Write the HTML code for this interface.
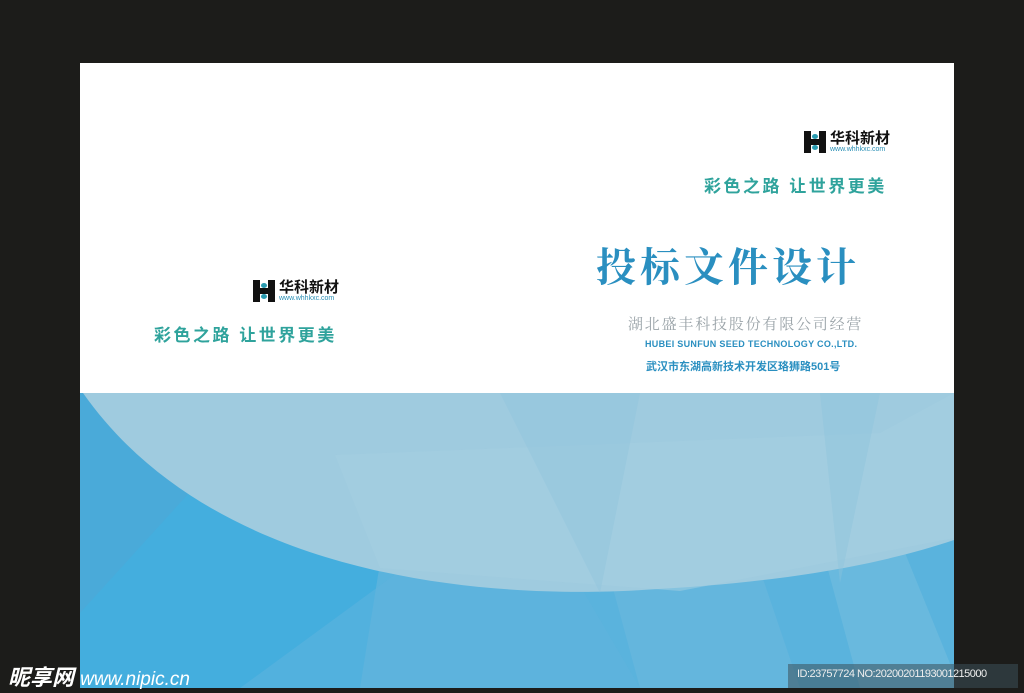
<!DOCTYPE html>
<html><head><meta charset="utf-8"><style>
*{margin:0;padding:0;box-sizing:border-box}
body{width:1024px;height:693px;background:#1c1c1a;position:relative;overflow:hidden;font-family:"Liberation Sans","Noto Sans CJK SC",sans-serif}
.page{position:absolute;left:80px;top:63px;width:874px;height:330px;background:#fff}
.abs{position:absolute;white-space:nowrap}
.logo{position:absolute;display:flex;align-items:center}
.mark{width:22px;height:22px;position:relative;margin-right:4px}
.mark i{position:absolute;background:#111}
.lt{font-weight:bold;color:#111;font-size:15px;line-height:15px}
.url{font-size:7px;color:#2a8fb5;line-height:7px}
.tag{color:#2fa39c;font-weight:bold;font-size:17px;letter-spacing:2.5px}
</style></head><body>
<div class="page"></div>
<div class="logo" style="left:804px;top:131px">
 <div class="mark"><i style="left:0;top:0;width:7px;height:22px"></i><i style="right:0;top:0;width:7px;height:22px"></i><i style="left:0;top:8px;width:22px;height:6px"></i><i style="left:8px;top:3px;width:6px;height:5px;background:#2a9bb0;border-radius:50%"></i><i style="left:8px;top:14px;width:6px;height:5px;background:#2a9bb0;border-radius:50%"></i></div>
 <div><div class="lt">华科新材</div><div class="url">www.whhkxc.com</div></div>
</div>
<div class="abs tag" style="left:704px;top:172px">彩色之路 让世界更美</div>
<div class="abs" style="left:596px;top:236px;font-family:'Liberation Serif','Noto Serif CJK SC',serif;font-weight:bold;color:#2a8fc0;font-size:40px;letter-spacing:4px">投标文件设计</div>
<div class="abs" style="left:628px;top:313px;font-family:'Liberation Serif','Noto Serif CJK SC',serif;color:#9aa3a8;font-size:15px;letter-spacing:1.8px">湖北盛丰科技股份有限公司经营</div>
<div class="abs" style="left:645px;top:339px;color:#2a8fc0;font-weight:bold;font-size:9px;letter-spacing:.3px">HUBEI SUNFUN SEED TECHNOLOGY CO.,LTD.</div>
<div class="abs" style="left:646px;top:358px;color:#2a8fc0;font-weight:bold;font-size:11px">武汉市东湖高新技术开发区珞狮路501号</div>
<div class="logo" style="left:253px;top:280px">
 <div class="mark"><i style="left:0;top:0;width:7px;height:22px"></i><i style="right:0;top:0;width:7px;height:22px"></i><i style="left:0;top:8px;width:22px;height:6px"></i><i style="left:8px;top:3px;width:6px;height:5px;background:#2a9bb0;border-radius:50%"></i><i style="left:8px;top:14px;width:6px;height:5px;background:#2a9bb0;border-radius:50%"></i></div>
 <div><div class="lt">华科新材</div><div class="url">www.whhkxc.com</div></div>
</div>
<div class="abs tag" style="left:154px;top:321px">彩色之路 让世界更美</div>
<svg class="abs" style="left:80px;top:393px" width="874" height="295" viewBox="0 0 874 295">
 <rect width="874" height="295" fill="#44aede"/>
 <polygon points="0,0 200,0 0,220" fill="#4aaad9"/>
 <polygon points="300,170 874,130 874,295 280,295" fill="#5db4dd" opacity=".9"/>
 <polygon points="480,0 620,0 720,295 560,295" fill="#6ab8dd" opacity=".6"/>
 <polygon points="700,0 760,0 880,295 780,295" fill="#78c0e0" opacity=".5"/>
 <polygon points="160,295 440,90 560,295" fill="#5fb3dd" opacity=".5"/>
 <path d="M3,0 C140,195 430,205 562,197 C700,190 800,172 874,147 L874,0 Z" fill="#9fcbdf"/>
 <polygon points="255,62 800,40 874,0 874,145 600,198 300,175" fill="#a6cfe1" opacity=".5"/>
 <polygon points="420,0 560,0 520,200" fill="#8fc3dc" opacity=".4"/>
 <polygon points="740,0 800,0 760,190" fill="#8cc2dc" opacity=".4"/>
</svg>
<div class="abs" style="left:8px;top:660px;color:#fff;font-weight:bold;font-style:italic;font-size:22px">昵享网 <span style="font-size:19px;font-weight:normal">www.nipic.cn</span></div>
<div class="abs" style="left:788px;top:664px;width:230px;height:24px;background:rgba(60,80,90,.55)"></div>
<div class="abs" style="left:797px;top:668px;color:#eee;font-size:11px;letter-spacing:-0.5px">ID:23757724 NO:20200201193001215000</div>
</body></html>
